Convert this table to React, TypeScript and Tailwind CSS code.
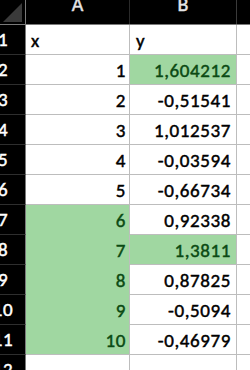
import React from 'react';

type Row = {
  n: number;
  a: string;
  b: string;
  aGreen?: boolean;
  bGreen?: boolean;
  text?: boolean;
};

const rows: Row[] = [
  { n: 1, a: 'x', b: 'y', text: true },
  { n: 2, a: '1', b: '1,604212', bGreen: true },
  { n: 3, a: '2', b: '-0,51541' },
  { n: 4, a: '3', b: '1,012537' },
  { n: 5, a: '4', b: '-0,03594' },
  { n: 6, a: '5', b: '-0,66734' },
  { n: 7, a: '6', b: '0,92338', aGreen: true },
  { n: 8, a: '7', b: '1,3811', aGreen: true, bGreen: true },
  { n: 9, a: '8', b: '0,87825', aGreen: true },
  { n: 10, a: '9', b: '-0,5094', aGreen: true },
  { n: 11, a: '10', b: '-0,46979', aGreen: true },
  { n: 12, a: '', b: '' },
];

const font = { fontFamily: 'Carlito, "Open Sans", Lato, sans-serif' };

export default function App() {
  return (
    <div
      className="w-[250px] h-[370px] overflow-hidden bg-white font-medium [-webkit-text-stroke:0.45px_currentColor]"
      style={font}
    >
      {/* column header */}
      <div className="flex h-[25px] bg-black border-b border-[#7a7a7a]">
        <div className="w-[26px] shrink-0 border-r border-[#7a7a7a]">
          <svg width="25" height="24" viewBox="0 0 25 24">
            <polygon points="22,3 22,22 3,22" fill="#3a3a3a" />
          </svg>
        </div>
        <div className="w-[104px] shrink-0 overflow-hidden flex justify-center border-r border-[#2a2a2a]">
          <span className="mt-[-6px] text-[20px] leading-none text-[#e6e6e6]">A</span>
        </div>
        <div className="w-[107px] shrink-0 overflow-hidden flex justify-center border-r border-[#3a3a3a]">
          <span className="mt-[-6px] text-[20px] leading-none text-[#e6e6e6]">B</span>
        </div>
        <div className="flex-1" />
      </div>

      {rows.map((r, i) => {
        const nextGreenA = rows[i + 1]?.aGreen;
        return (
          <div key={r.n} className="flex h-[30px]">
            <div className="w-[26px] shrink-0 overflow-hidden bg-black border-r border-[#7a7a7a] border-b border-b-[#2e2e2e] flex items-end pb-[5px]">
              <span className="w-[40px] ml-[-17px] shrink-0 text-center text-[19px] leading-none text-white tracking-[0.5px]">
                {r.n}
              </span>
            </div>
            <div
              className={
                'w-[104px] shrink-0 flex items-end pb-[4px] border-r border-[#bdbdbd] border-b text-[19px] leading-none tracking-[0.6px] ' +
                (r.aGreen
                  ? 'bg-[#a0d7a1] text-[#0b4a13] ' + (nextGreenA ? 'border-b-[#a0d7a1]' : 'border-b-[#bdbdbd]')
                  : 'bg-white text-black border-b-[#bdbdbd]') +
                (r.text ? ' justify-start pl-[5px]' : ' justify-end pr-[3px]')
              }
            >
              {r.a}
            </div>
            <div
              className={
                'w-[107px] shrink-0 flex items-end pb-[4px] border-r border-[#bdbdbd] border-b border-b-[#bdbdbd] text-[19px] leading-none tracking-[0.6px] ' +
                (r.bGreen ? 'bg-[#a0d7a1] text-[#0b4a13]' : 'bg-white text-black') +
                (r.text ? ' justify-start pl-[6px]' : ' justify-end pr-[5px]')
              }
            >
              {r.b}
            </div>
            <div className="flex-1 border-b border-[#bdbdbd] bg-white" />
          </div>
        );
      })}
    </div>
  );
}
